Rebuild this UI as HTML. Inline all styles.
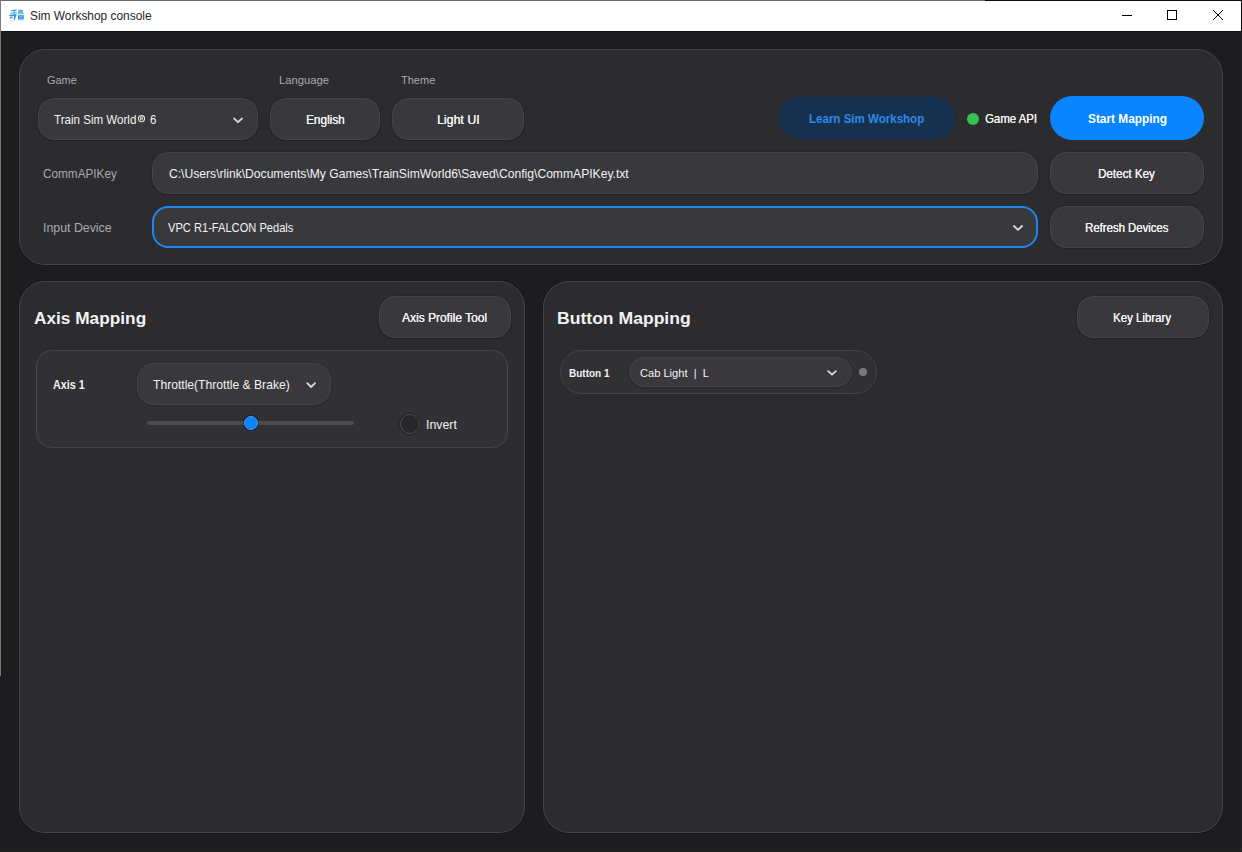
<!DOCTYPE html>
<html><head><meta charset="utf-8">
<style>
*{margin:0;padding:0;box-sizing:border-box}
html,body{width:1242px;height:852px;overflow:hidden;background:#1d1d20;font-family:"Liberation Sans",sans-serif}
.abs{position:absolute}
.t{position:absolute;white-space:nowrap;line-height:1;transform-origin:0 0}
#winl{left:0;top:0;width:1px;height:676px;background:#7a7a7a}
#wint{left:0;top:0;width:1242px;height:1px;background:#6a6a6a}
#title{left:1px;top:1px;width:1241px;height:30px;background:#fff}
#tline{left:1px;top:31px;width:1241px;height:1px;background:#141416}
.panel{position:absolute;background:#2c2c2f;border:1px solid #46464a;border-radius:26px;box-shadow:0 0 0 1px rgba(0,0,0,0.15)}
.ctl{position:absolute;background:#39393d;border:1px solid #454549;border-radius:16px;box-shadow:0 0 0 1px rgba(0,0,0,0.08),0 1px 2px rgba(0,0,0,0.14)}
.lbl{color:#a9a9ad}
.wt{color:#f2f2f2}
</style></head>
<body>
<div class="abs" id="title"></div>
<div class="abs" id="wint"></div>
<div class="abs" id="winl"></div>
<div class="abs" id="tline"></div>
<div class="abs" style="left:985px;top:0;width:257px;height:1px;background:#0c0c0c"></div>
<div class="abs" style="left:1241px;top:0;width:1px;height:32px;background:#0c0c0c"></div>
<div class="abs" style="left:1241px;top:32px;width:1px;height:820px;background:#262427"></div>
<div class="abs" style="left:1px;top:32px;width:1px;height:645px;background:#19191b"></div>
<div class="abs" style="left:0;top:851px;width:1242px;height:1px;background:#1f1e1e"></div>

<!-- top panel -->
<div class="panel" style="left:19px;top:49px;width:1204px;height:216px"></div>
<!-- axis panel -->
<div class="panel" style="left:19px;top:281px;width:506px;height:552px"></div>
<!-- button panel -->
<div class="panel" style="left:543px;top:281px;width:680px;height:552px"></div>

<!-- top controls -->
<div class="ctl" style="left:38px;top:98px;width:220px;height:42px"></div>
<div class="ctl" style="left:270px;top:98px;width:110px;height:42px"></div>
<div class="ctl" style="left:392px;top:98px;width:132px;height:42px"></div>
<div class="abs" style="left:779px;top:97px;width:176px;height:42px;background:#16314f;border-radius:21px;box-shadow:0 0 1px 1px rgba(20,40,70,0.35)"></div>
<div class="abs" style="left:966.8px;top:113.2px;width:12px;height:12px;background:#33c553;border-radius:50%"></div>
<div class="abs" style="left:1050px;top:96px;width:154px;height:44px;background:#0a84ff;border-radius:22px"></div>

<div class="ctl" style="left:152px;top:152px;width:886px;height:42px"></div>
<div class="ctl" style="left:1050px;top:152px;width:154px;height:42px"></div>
<div class="ctl" style="left:152px;top:206px;width:886px;height:42px;border:2px solid #2485e6;box-shadow:0 0 0 1px rgba(18,48,88,0.55)"></div>
<div class="ctl" style="left:1050px;top:206px;width:154px;height:42px"></div>

<!-- axis -->
<div class="ctl" style="left:379px;top:296px;width:132px;height:42px"></div>
<div class="abs" style="left:36px;top:350px;width:472px;height:98px;background:#313135;border:1px solid #46464a;border-radius:16px"></div>
<div class="ctl" style="left:137px;top:363px;width:194px;height:42px;border-radius:17px"></div>
<div class="abs" style="left:147px;top:421px;width:207px;height:4px;background:#4c4c50;border-radius:2px"></div>
<div class="abs" style="left:243.5px;top:416px;width:14px;height:14px;background:#0a84ff;border:1px solid #3d9cff;border-radius:50%;box-shadow:0 0 0 1px rgba(0,0,0,0.35)"></div>
<div class="abs" style="left:399.5px;top:413.5px;width:20.5px;height:20.5px;background:#28282b;border:1px solid #48484e;border-radius:50%;box-shadow:0 0 0 1.5px rgba(0,0,0,0.15)"></div>

<!-- button -->
<div class="ctl" style="left:1077px;top:296px;width:132px;height:42px"></div>
<div class="abs" style="left:560px;top:350px;width:317px;height:44px;background:#313134;border:1px solid #444448;border-radius:22px"></div>
<div class="ctl" style="left:629px;top:357px;width:223px;height:30px;border-radius:15px"></div>
<div class="abs" style="left:859px;top:368px;width:8px;height:8px;background:#7a7a7d;border-radius:50%"></div>

<!-- ICONS -->
<svg class="abs" style="left:0;top:0" width="1242" height="852" viewBox="0 0 1242 852">
 <g fill="none" stroke="#d8d8dc" stroke-width="1.8" stroke-linecap="round" stroke-linejoin="round">
  <polyline points="234.1,118.5 238,122.2 242,118.5"/>
  <polyline points="1014,226 1018,229.9 1022,226"/>
  <polyline points="307.2,383.2 311.1,387 315.1,383.2"/>
  <polyline points="828.2,371.1 832,374.7 835.9,371.1"/>
 </g>
 <g stroke="#000" stroke-width="1" fill="none" shape-rendering="crispEdges">
  <line x1="1122" y1="15.5" x2="1132" y2="15.5"/>
  <rect x="1167.5" y="10.5" width="9" height="9"/>
 </g>
 <g stroke="#000" stroke-width="1" fill="none">
  <line x1="1213" y1="10" x2="1223" y2="20"/>
  <line x1="1223" y1="10" x2="1213" y2="20"/>
 </g>
 <g>
  <path d="M11.2 10.6 L16.5 10.2" stroke="#3f9fd8" stroke-width="1.3" fill="none"/>
  <path d="M10.5 13.2 L17 12.8" stroke="#56bfe9" stroke-width="1.2" fill="none"/>
  <path d="M14.8 11 L13.5 13.5" stroke="#4aaee0" stroke-width="1.2" fill="none"/>
  <path d="M9.5 15.5 L16.5 15" stroke="#3d8fc8" stroke-width="1.3" fill="none"/>
  <path d="M15.5 14.8 L14.2 19.5" stroke="#3b8fd0" stroke-width="1.6" fill="none"/>
  <path d="M9.8 18.2 L12.5 16.8" stroke="#3f7fb8" stroke-width="1.2" fill="none"/>
  <path d="M18.5 9.8 L22.5 9.8 L23 13.2 L18.2 13.2 Z" fill="#3aa4e4"/>
  <rect x="19.5" y="11" width="2.5" height="1.5" fill="#62d4f8"/>
  <path d="M17.5 14 L24 13.7" stroke="#4fc2ee" stroke-width="1" fill="none"/>
  <rect x="18" y="15.2" width="5.8" height="4.3" fill="#3a92d6"/>
  <rect x="19.2" y="16.4" width="3.3" height="0.9" fill="#8fd2f4"/>
  <rect x="19.2" y="18" width="3.3" height="0.6" fill="#6ab8ea"/>
  <rect x="9" y="20.3" width="16" height="1" fill="#dfe6ea"/>
 </g>
</svg>
<svg class="abs" style="left:136px;top:113px" width="11" height="11" viewBox="0 0 11 11"><circle cx="5.5" cy="5.6" r="3.1" fill="none" stroke="#e6e6e8" stroke-width="1.1"/><path d="M4.4 7.4 V3.9 H5.9 Q7 3.9 7 4.8 Q7 5.7 5.9 5.7 H4.4 M5.8 5.7 L6.9 7.4" fill="none" stroke="#e6e6e8" stroke-width="0.9"/></svg>
<!-- /ICONS -->
<!-- TEXTS -->
<div class="t" style="left:29.93px;top:8.95px;font-size:13.0px;color:#262626;transform:scaleX(0.9160)">Sim Workshop console</div>
<div class="t" style="left:47.19px;top:75.22px;font-size:11.5px;color:#a9a9ad;transform:scaleX(0.9501)">Game</div>
<div class="t" style="left:278.52px;top:75.22px;font-size:11.5px;color:#a9a9ad;transform:scaleX(0.9759)">Language</div>
<div class="t" style="left:400.83px;top:75.22px;font-size:11.5px;color:#a9a9ad;transform:scaleX(0.9589)">Theme</div>
<div class="t" style="left:53.62px;top:112.95px;font-size:13.0px;color:#f2f2f2;transform:scaleX(0.8904)">Train Sim World</div>
<div class="t" style="left:150.16px;top:112.95px;font-size:13.0px;color:#f2f2f2;transform:scaleX(0.8862)">6</div>
<div class="t" style="left:305.58px;top:112.95px;font-size:13.0px;color:#f2f2f2;transform:scaleX(0.9073);text-shadow:0.2px 0 0 currentColor">English</div>
<div class="t" style="left:436.83px;top:112.95px;font-size:13.0px;color:#f2f2f2;transform:scaleX(0.9504);text-shadow:0.2px 0 0 currentColor">Light UI</div>
<div class="t" style="left:809.08px;top:111.95px;font-size:13.0px;color:#2f8ae8;font-weight:bold;transform:scaleX(0.8876)">Learn Sim Workshop</div>
<div class="t" style="left:985.47px;top:111.95px;font-size:13.0px;color:#f2f2f2;transform:scaleX(0.8766);text-shadow:0.2px 0 0 currentColor">Game API</div>
<div class="t" style="left:1087.51px;top:111.95px;font-size:13.0px;color:#ffffff;font-weight:bold;transform:scaleX(0.9109)">Start Mapping</div>
<div class="t" style="left:42.75px;top:166.95px;font-size:13.0px;color:#a9a9ad;transform:scaleX(0.9047)">CommAPIKey</div>
<div class="t" style="left:169.23px;top:166.95px;font-size:13.0px;color:#f2f2f2;transform:scaleX(0.9322)">C:\Users\rlink\Documents\My Games\TrainSimWorld6\Saved\Config\CommAPIKey.txt</div>
<div class="t" style="left:1097.79px;top:166.95px;font-size:13.0px;color:#f2f2f2;transform:scaleX(0.8918);text-shadow:0.2px 0 0 currentColor">Detect Key</div>
<div class="t" style="left:42.83px;top:220.95px;font-size:13.0px;color:#a9a9ad;transform:scaleX(0.9502)">Input Device</div>
<div class="t" style="left:168.00px;top:220.95px;font-size:13.0px;color:#f2f2f2;transform:scaleX(0.8547)">VPC R1-FALCON Pedals</div>
<div class="t" style="left:1084.81px;top:220.95px;font-size:13.0px;color:#f2f2f2;transform:scaleX(0.8739);text-shadow:0.2px 0 0 currentColor">Refresh Devices</div>
<div class="t" style="left:34.13px;top:309.55px;font-size:17.0px;color:#f2f2f2;font-weight:bold;transform:scaleX(1.0151)">Axis Mapping</div>
<div class="t" style="left:402.40px;top:310.95px;font-size:13.0px;color:#f2f2f2;transform:scaleX(0.9212);text-shadow:0.2px 0 0 currentColor">Axis Profile Tool</div>
<div class="t" style="left:53.43px;top:377.95px;font-size:13.0px;color:#f2f2f2;font-weight:bold;transform:scaleX(0.8312)">Axis 1</div>
<div class="t" style="left:153.31px;top:377.95px;font-size:13.0px;color:#f2f2f2;transform:scaleX(0.9322)">Throttle(Throttle &amp; Brake)</div>
<div class="t" style="left:426.03px;top:417.95px;font-size:13.0px;color:#f2f2f2;transform:scaleX(0.9511)">Invert</div>
<div class="t" style="left:557.40px;top:309.55px;font-size:17.0px;color:#f2f2f2;font-weight:bold;transform:scaleX(1.0338)">Button Mapping</div>
<div class="t" style="left:1112.70px;top:310.95px;font-size:13.0px;color:#f2f2f2;transform:scaleX(0.8821);text-shadow:0.2px 0 0 currentColor">Key Library</div>
<div class="t" style="left:569.08px;top:368.50px;font-size:10.0px;color:#f2f2f2;font-weight:bold;transform:scaleX(0.9982)">Button 1</div>
<div class="t" style="left:640.18px;top:368.23px;font-size:11.5px;color:#f2f2f2;transform:scaleX(0.9650)">Cab Light&nbsp; |&nbsp; L</div>
<!-- /TEXTS -->
</body></html>
